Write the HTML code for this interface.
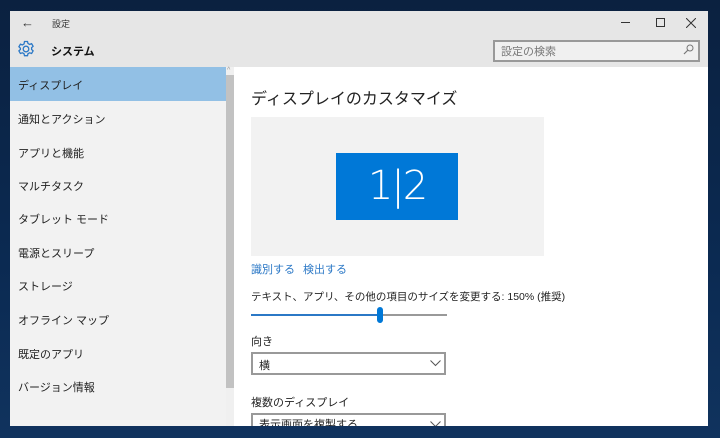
<!DOCTYPE html>
<html><head><meta charset="utf-8"><style>
*{margin:0;padding:0;box-sizing:border-box}
body{width:720px;height:438px;overflow:hidden;background:linear-gradient(180deg,#0b2140 0%,#0b2a52 60%,#10335e 100%);font-family:"Liberation Sans","Noto Sans CJK JP",sans-serif;position:relative}
.win{position:absolute;left:10px;top:11px;width:698px;height:415px;background:#fff;overflow:hidden}
.tb{position:absolute;left:0;top:0;width:698px;height:56px;background:#e6e6e6}
.side{position:absolute;left:0;top:56px;width:216px;height:359px;background:#f2f2f2}
.item{position:absolute;left:8px;font-size:11px;color:#222}
.sel{position:absolute;left:0;top:0;width:216px;height:34px;background:#92c0e5}
.sb{position:absolute;left:216px;top:56px;width:8px;height:359px;background:#f0f0f0}
.thumb{position:absolute;left:216px;top:75px;width:8px;height:313px;background:#c2c2c2}
.t{position:absolute;white-space:nowrap}
.dd{position:absolute;left:241px;width:195px;height:23px;border:2px solid #999;background:#fff}
</style></head><body>
<div class="win">
<div class="tb">
<div class="t" style="left:11px;top:4px;font-size:13px;color:#333">←</div>
<div class="t" style="left:42px;top:6px;font-size:9px;color:#333">設定</div>
<div style="position:absolute;left:611px;top:11px;width:9px;height:1px;background:#333"></div>
<div style="position:absolute;left:646px;top:7px;width:9px;height:9px;border:1px solid #333"></div>
<svg style="position:absolute;left:676px;top:7px" width="10" height="10"><path d="M0 0L10 10M10 0L0 10" stroke="#333" stroke-width="1"/></svg>
<svg style="position:absolute;left:7px;top:29px" width="18" height="18" viewBox="0 0 18 18"><g fill="none" stroke="#2b78c6" stroke-width="1.3"><circle cx="9" cy="9" r="2.8"/><path d="M7.5 1.5h3l.5 2 1.6.9 2-.7 1.5 2.6-1.5 1.4v1.8l1.5 1.4-1.5 2.6-2-.7-1.6.9-.5 2h-3l-.5-2-1.6-.9-2 .7-1.5-2.6 1.5-1.4V8.2L1.9 6.8l1.5-2.6 2 .7L7 4z"/></g></svg>
<div class="t" style="left:41px;top:32px;font-size:11px;font-weight:bold;color:#111">システム</div>
<div style="position:absolute;left:483px;top:29px;width:207px;height:22px;border:2px solid #999;background:#f0f0f0"></div>
<div class="t" style="left:491px;top:32px;font-size:11px;color:#777">設定の検索</div>
<svg style="position:absolute;left:673px;top:33px" width="11" height="11"><circle cx="7" cy="4" r="3" fill="none" stroke="#777"/><path d="M5 6L1 10" stroke="#777" stroke-width="1.2"/></svg>
</div>
<div class="side">
<div class="sel"></div>
<div class="item" style="top:10px">ディスプレイ</div>
<div class="item" style="top:44px">通知とアクション</div>
<div class="item" style="top:78px">アプリと機能</div>
<div class="item" style="top:111px">マルチタスク</div>
<div class="item" style="top:144px">タブレット モード</div>
<div class="item" style="top:178px">電源とスリープ</div>
<div class="item" style="top:211px">ストレージ</div>
<div class="item" style="top:245px">オフライン マップ</div>
<div class="item" style="top:279px">既定のアプリ</div>
<div class="item" style="top:312px">バージョン情報</div>
</div>
<div class="sb"></div><div class="thumb" style="top:64px"></div>
<div class="t" style="left:217px;top:56px;font-size:7px;color:#999">^</div>
<div class="t" style="left:241px;top:74px;font-size:16px;color:#222">ディスプレイのカスタマイズ</div>
<div style="position:absolute;left:241px;top:106px;width:293px;height:139px;background:#f2f2f2"></div>
<div style="position:absolute;left:326px;top:142px;width:122px;height:67px;background:#0078d7"></div>
<div class="t" style="left:326px;top:146px;width:122px;text-align:center;font-family:'DejaVu Sans',sans-serif;font-size:40px;font-weight:200;color:#fff;line-height:58px;letter-spacing:-2px">1|2</div>
<div class="t" style="left:241px;top:250px;font-size:11px;color:#2b78c6">識別する</div>
<div class="t" style="left:293px;top:250px;font-size:11px;color:#2b78c6">検出する</div>
<div class="t" style="left:241px;top:278px;font-size:10.5px;color:#222">テキスト、アプリ、その他の項目のサイズを変更する: 150% (推奨)</div>
<div style="position:absolute;left:241px;top:303px;width:130px;height:2px;background:#2b78c6"></div>
<div style="position:absolute;left:371px;top:303px;width:66px;height:2px;background:#999"></div>
<div style="position:absolute;left:367px;top:296px;width:6px;height:16px;border-radius:3px;background:#0078d7"></div>
<div class="t" style="left:241px;top:322px;font-size:11px;color:#222">向き</div>
<div class="dd" style="top:341px"></div>
<div class="t" style="left:249px;top:346px;font-size:11px;color:#222">横</div>
<svg style="position:absolute;left:420px;top:349px" width="11" height="7"><path d="M0.5 0.5L5.5 5.5L10.5 0.5" fill="none" stroke="#555"/></svg>
<div class="t" style="left:241px;top:383px;font-size:11px;color:#222">複数のディスプレイ</div>
<div class="dd" style="top:402px"></div>
<div class="t" style="left:249px;top:405px;font-size:11px;color:#222">表示画面を複製する</div>
<svg style="position:absolute;left:420px;top:410px" width="11" height="7"><path d="M0.5 0.5L5.5 5.5L10.5 0.5" fill="none" stroke="#555"/></svg>
</div>
</body></html>
